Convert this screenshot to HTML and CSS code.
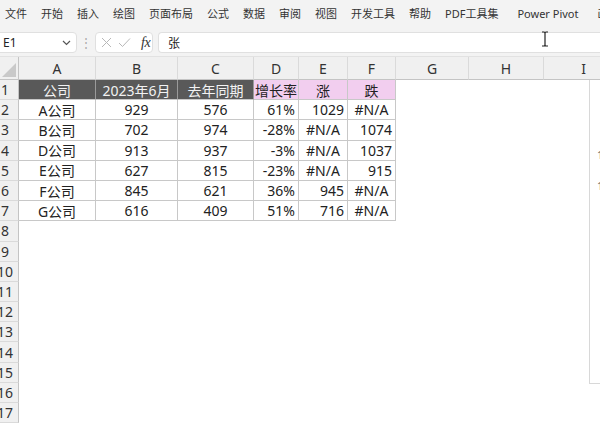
FILE: index.html
```html
<!DOCTYPE html>
<html lang="zh-CN">
<head>
<meta charset="utf-8">
<title>Excel</title>
<link rel="stylesheet" href="styles.css">
</head>
<body>
<div class="app">
  <div class="tabs">
    <span>文件</span><span>开始</span><span>插入</span><span>绘图</span><span>页面布局</span><span>公式</span><span>数据</span><span>审阅</span><span>视图</span><span>开发工具</span><span>帮助</span><span class="wide">PDF工具集</span><span class="wide">Power Pivot</span><span>画</span>
  </div>
  <div class="fbar">
    <div class="namebox"><span>E1</span><svg class="chev" width="9" height="6" viewBox="0 0 9 6"><path d="M1 1 L4.5 4.5 L8 1" fill="none" stroke="#555" stroke-width="1.2"/></svg></div>
    <span class="vdots">⋮</span>
    <div class="fnbox">
      <svg width="11" height="11" viewBox="0 0 11 11"><path d="M1 1 L10 10 M10 1 L1 10" stroke="#b8b8b8" stroke-width="1"/></svg>
      <svg width="13" height="11" viewBox="0 0 13 11"><path d="M1 6 L4.5 9.5 L12 1.5" fill="none" stroke="#b8b8b8" stroke-width="1"/></svg>
      <span class="fx">fx</span>
    </div>
    <div class="input">张</div>
  </div>
  <div class="sheet">
    <div class="ch corner"><svg width="14" height="14" viewBox="0 0 14 14"><path d="M14 0 L14 14 L0 14 Z" fill="#c9c9c9"/></svg></div>
    <div class="ch">A</div><div class="ch">B</div><div class="ch">C</div><div class="ch">D</div><div class="ch">E</div><div class="ch">F</div><div class="ch">G</div><div class="ch">H</div><div class="ch">I</div>

    <div class="rh">1</div>
    <div class="c dark">公司</div><div class="c dark">2023年6月</div><div class="c dark">去年同期</div>
    <div class="c pink">增长率</div><div class="c pink">涨</div><div class="c pink">跌</div><div class="rest"></div>

    <div class="rh">2</div>
    <div class="c">A公司</div><div class="c">929</div><div class="c">576</div><div class="c r">61%</div><div class="c r">1029</div><div class="c">#N/A</div><div class="rest"></div>

    <div class="rh">3</div>
    <div class="c">B公司</div><div class="c">702</div><div class="c">974</div><div class="c r">-28%</div><div class="c">#N/A</div><div class="c r">1074</div><div class="rest"></div>

    <div class="rh">4</div>
    <div class="c">D公司</div><div class="c">913</div><div class="c">937</div><div class="c r">-3%</div><div class="c">#N/A</div><div class="c r">1037</div><div class="rest"></div>

    <div class="rh">5</div>
    <div class="c">E公司</div><div class="c">627</div><div class="c">815</div><div class="c r">-23%</div><div class="c">#N/A</div><div class="c r">915</div><div class="rest"></div>

    <div class="rh">6</div>
    <div class="c">F公司</div><div class="c">845</div><div class="c">621</div><div class="c r">36%</div><div class="c r">945</div><div class="c">#N/A</div><div class="rest"></div>

    <div class="rh">7</div>
    <div class="c">G公司</div><div class="c">616</div><div class="c">409</div><div class="c r">51%</div><div class="c r">716</div><div class="c">#N/A</div><div class="rest"></div>

    <div class="rh">8</div><div class="empty"></div>
    <div class="rh">9</div><div class="empty"></div>
    <div class="rh">10</div><div class="empty"></div>
    <div class="rh">11</div><div class="empty"></div>
    <div class="rh">12</div><div class="empty"></div>
    <div class="rh">13</div><div class="empty"></div>
    <div class="rh">14</div><div class="empty"></div>
    <div class="rh">15</div><div class="empty"></div>
    <div class="rh">16</div><div class="empty"></div>
    <div class="rh">17</div><div class="empty"></div>
  </div>
  <div class="pane"><span class="p1">1</span><span class="p2">1</span></div>
  <svg class="ibeam" width="8" height="16" viewBox="0 0 8 16"><path d="M1 1 L3 1 Q4 1 4 2.5 L4 13.5 Q4 15 3 15 L1 15 M7 1 L5 1 Q4 1 4 2.5 M4 13.5 Q4 15 5 15 L7 15" fill="none" stroke="#222" stroke-width="1.2"/></svg>
</div>
</body>
</html>
```

FILE: styles.css
```css
html, body {
  margin: 0;
  padding: 0;
  background: #fff;
  overflow: hidden;
}

.app {
  position: relative;
  width: 600px;
  height: 425px;
  overflow: hidden;
  font-family: "Noto Sans", "Noto Sans CJK SC", sans-serif;
  color: #222;
}

.tabs {
  height: 26px;
  background: #f3f3f3;
  display: flex;
  align-items: center;
  gap: 14px;
  padding-left: 5px;
  font-size: 11px;
  color: #333;
  white-space: nowrap;
}

.tabs .wide {
  margin-left: 0;
}

.tabs .wide + .wide {
  margin-left: 5px;
}

.tabs .wide + span:not(.wide) {
  margin-left: 5px;
}

.fbar {
  height: 30px;
  background: #f3f3f3;
  border-bottom: 1px solid #e2e2e2;
  display: flex;
  align-items: flex-start;
  padding-top: 6px;
  box-sizing: border-box;
  height: 31px;
}

.namebox {
  margin-left: -6px;
  width: 83px;
  height: 21px;
  box-sizing: border-box;
  background: #fff;
  border: 1px solid #e0e0e0;
  border-radius: 4px;
  display: flex;
  align-items: center;
  justify-content: space-between;
  padding: 0 5px 0 8px;
  font-size: 12px;
  color: #222;
}

.chev {
  display: block;
}

.vdots {
  width: 18px;
  text-align: center;
  color: #aaa;
  font-size: 12px;
  line-height: 21px;
}

.fnbox {
  width: 58px;
  height: 21px;
  box-sizing: border-box;
  background: #fff;
  border: 1px solid #e0e0e0;
  border-radius: 4px;
  display: flex;
  align-items: center;
  gap: 6px;
  padding-left: 5px;
}

.fnbox svg {
  display: block;
}

.fx {
  font-family: "Liberation Serif", "DejaVu Serif", serif;
  font-style: italic;
  font-size: 14px;
  color: #333;
  margin-left: 4px;
  letter-spacing: -0.5px;
}

.input {
  margin-left: 5px;
  flex: 1;
  height: 21px;
  box-sizing: border-box;
  background: #fff;
  border: 1px solid #e0e0e0;
  border-right: none;
  border-radius: 4px 0 0 4px;
  padding-left: 9px;
  font-size: 12px;
  line-height: 19px;
  font-family: "Noto Sans CJK SC", sans-serif;
}

.sheet {
  display: grid;
  grid-template-columns: 19px 77px 82px 76px 45px 49px 48px 73px 75px 80px;
  grid-template-rows: 23px repeat(17, 20.2px);
  font-size: 14px;
  width: 624px;
}

.sheet > div {
  box-sizing: border-box;
}

.ch {
  background: #f0f0f0;
  border-right: 1px solid #dadada;
  border-bottom: 1px solid #c4c4c4;
  display: flex;
  align-items: center;
  justify-content: center;
  color: #333;
  font-size: 14px;
}

.corner {
  align-items: flex-end;
  justify-content: flex-end;
  padding: 0 2px 2px 0;
  border-right: 1px solid #c4c4c4;
}

.corner svg {
  display: block;
}

.rh {
  background: #f0f0f0;
  border-right: 1px solid #c4c4c4;
  border-bottom: 1px solid #dadada;
  display: flex;
  align-items: center;
  justify-content: center;
  padding-right: 8px;
  overflow: hidden;
  color: #333;
  font-size: 14px;
  white-space: nowrap;
}

.c {
  border-right: 1px solid #c8c8c8;
  border-bottom: 1px solid #c8c8c8;
  display: flex;
  align-items: center;
  justify-content: center;
  padding: 0 3px;
  white-space: nowrap;
  background: #fff;
}

.c.r {
  justify-content: flex-end;
}

.c.dark {
  background: #595959;
  color: #f2f2f2;
  border-right-color: #9a9a9a;
}

.c.pink {
  background: #f2ceef;
  color: #222;
}

.rest {
  grid-column: 8 / -1;
  background: #fff;
}

.empty {
  grid-column: 2 / -1;
  background: #fff;
}

.pane {
  position: absolute;
  left: 589px;
  top: 80px;
  width: 20px;
  height: 304px;
  box-sizing: border-box;
  background: #fff;
  border-left: 1px solid #d8d8d8;
  border-bottom: 1px solid #d8d8d8;
  font-size: 11px;
  color: #666;
}

.pane span {
  position: absolute;
  left: 7px;
}

.pane .p1 {
  top: 67px;
}

.pane .p2 {
  top: 98px;
}

.ibeam {
  position: absolute;
  left: 541px;
  top: 31px;
}
```
